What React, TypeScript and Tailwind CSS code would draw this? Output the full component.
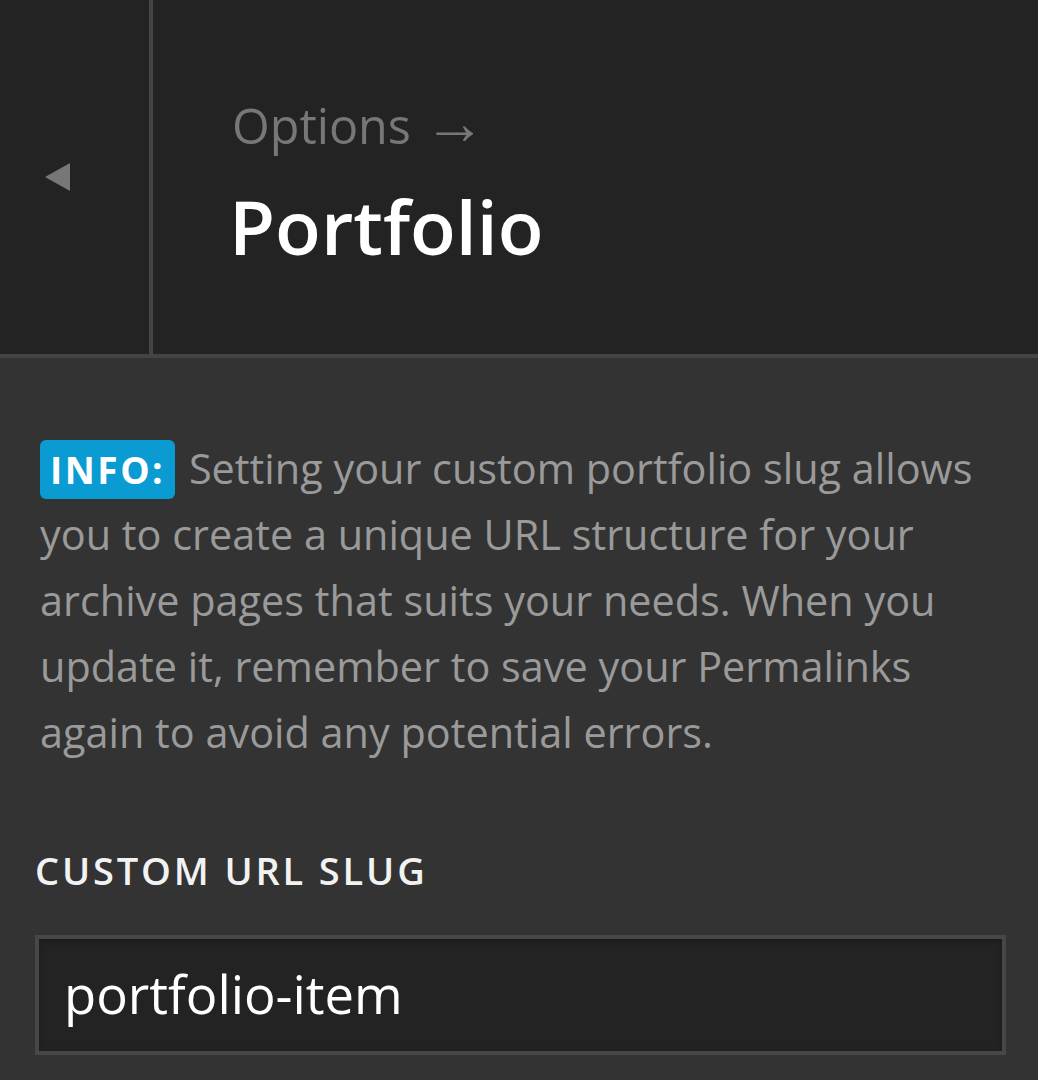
import React from "react";

export default function App() {
  return (
    <div
      className="min-h-screen w-full bg-[#333333] overflow-hidden"
      style={{ fontFamily: '"Open Sans", "Noto Sans", sans-serif' }}
    >
      <header className="flex h-[358px] border-b-[4px] border-[#444444] bg-[#232323]">
        <button className="w-[153px] shrink-0 border-r-[4px] border-[#444444] flex items-center pl-[45px] pb-[3px]">
          <svg width="25" height="28" viewBox="0 0 25 28" className="mt-[2px]">
            <polygon points="0,14 25,0 25,28" fill="#777777" />
          </svg>
        </button>
        <div className="flex flex-col pl-[79px] pt-[97px]">
          <span className="text-[48.5px] leading-[57px] text-[#777777] whitespace-nowrap">
            Options{" "}
            <span
              className="text-[62px] leading-[0]"
              style={{ fontFamily: '"Liberation Sans", sans-serif' }}
            >
              →
            </span>
          </span>
          <h1 className="mt-[27px] -ml-[3px] text-[75px] leading-[90px] font-semibold text-white">
            Portfolio
          </h1>
        </div>
      </header>
      <main className="pl-[35px] pr-[32px] pt-[77px]">
        <p className="ml-[5px] text-[41.4px] leading-[66px] text-[#9a9a9a]">
          <span className="inline-block rounded-[6px] bg-[#0a9bd3] pl-[10px] pr-[10px] text-[37px] leading-[59px] font-bold tracking-[2.5px] text-white mr-[3px]">
            INFO:
          </span>{" "}
          Setting your custom portfolio slug allows you to create a unique URL
          structure for your archive pages that suits your needs. When you
          update it, remember to save your Permalinks again to avoid any
          potential errors.
        </p>
        <label className="mt-[86px] block text-[38px] leading-[38px] font-semibold tracking-[2.85px] text-[#f2f2f2]">
          CUSTOM URL SLUG
        </label>
        <div className="mt-[46px] h-[120px] border-[4px] border-[#474747] bg-[#232323] shadow-[inset_0_2px_6px_rgba(0,0,0,0.25)] flex items-center pl-[25px]">
          <span className="text-[52.6px] text-white leading-none pb-[2px]">
            portfolio-item
          </span>
        </div>
      </main>
    </div>
  );
}
